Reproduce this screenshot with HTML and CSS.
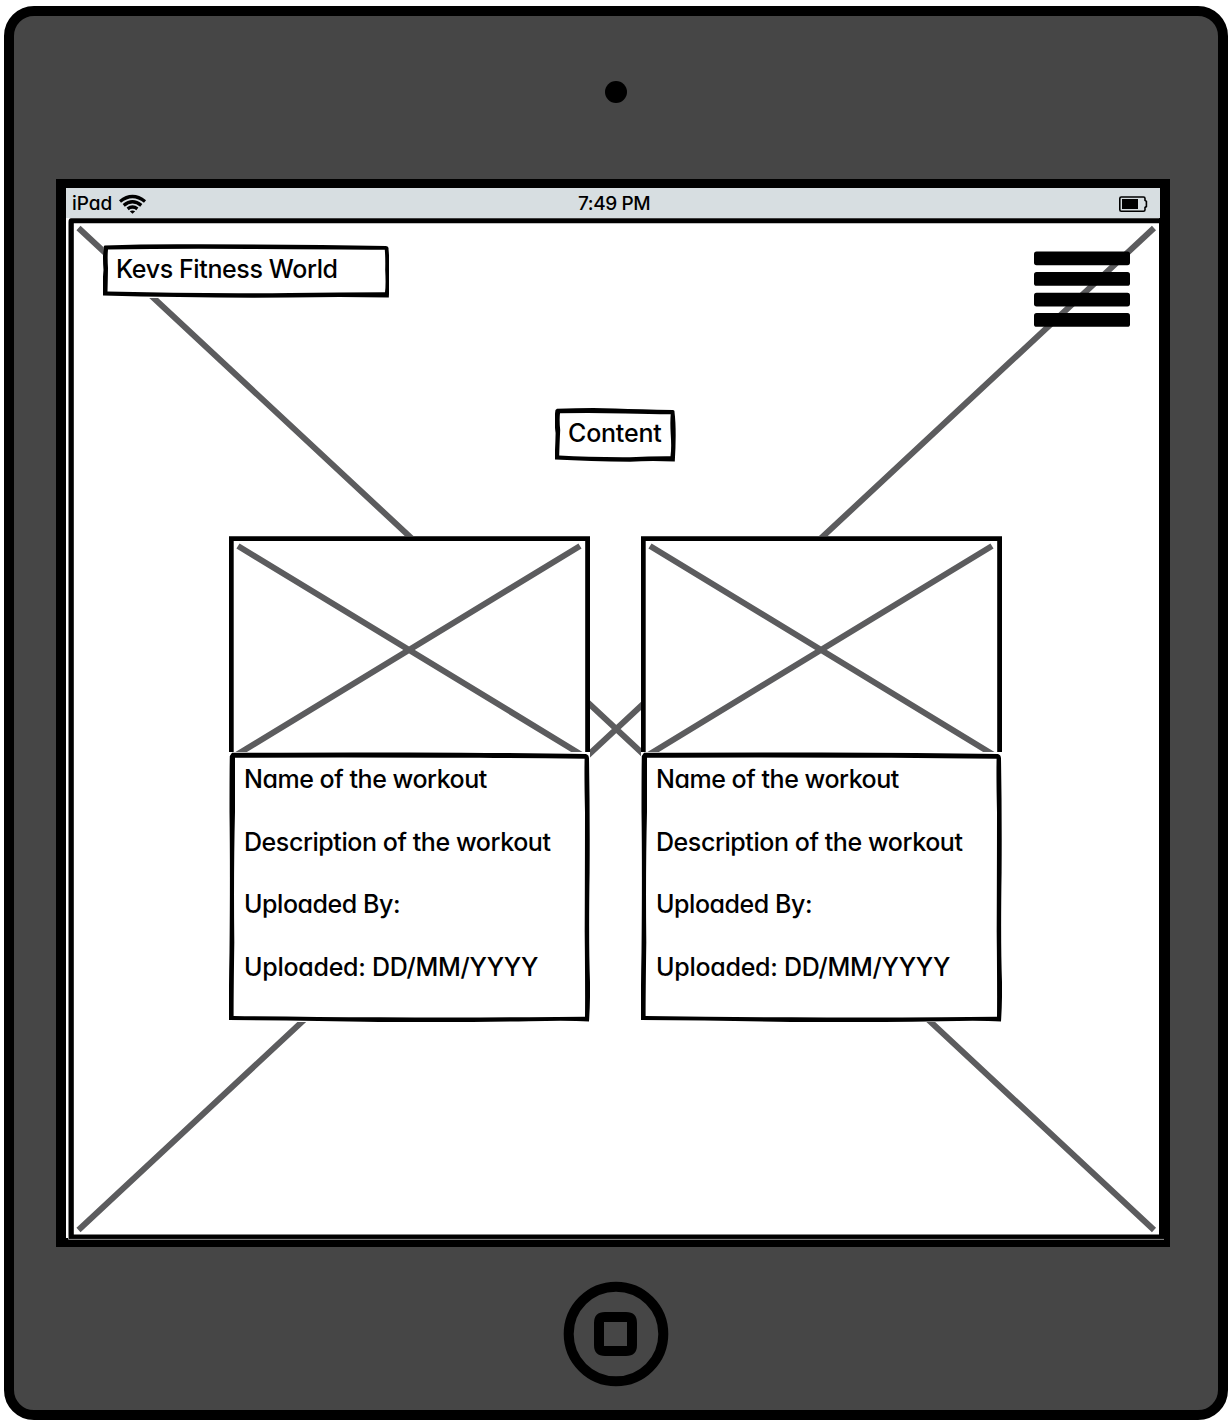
FILE: index.html
```html
<!DOCTYPE html>
<html lang="en">
<head>
<meta charset="utf-8">
<title>Kevs Fitness World</title>
<link rel="stylesheet" href="styles.css">
</head>
<body>
<div class="device">
  <div class="camera"></div>
  <div class="screen">
    <div class="status">
      <div class="carrier"><span class="carrier-name">iPad</span>
        <svg class="wifi" width="28" height="20" viewBox="119 193 28 20" fill="none" stroke="#000" stroke-width="3.3">
          <path d="M120 200.500Q132.500 190.500 145 200.500M123.700 204.400Q132.500 197.200 141.300 204.400M127.600 207.900Q132.500 204.200 137.400 207.900"/>
          <path d="M129.800 210.200Q132.500 208.600 135.200 210.200L132.500 212.800Z" fill="#000" stroke="none"/>
        </svg>
      </div>
      <span class="clock">7:49 PM</span>
      <svg class="battery" width="30" height="18" viewBox="1118 195 30 18">
        <path d="M1121.300 197H1143.500Q1145 197 1145 198.500V200.300L1146.400 201.300V206.500L1145 207.500V209.700Q1145 211.200 1143.500 211.200H1121.300Q1119.800 211.200 1119.800 209.700V198.500Q1119.800 197 1121.300 197Z" fill="none" stroke="#000" stroke-width="1.6"/>
        <path d="M1122 199H1138V209H1122Z"/>
      </svg>
    </div>
    <main class="canvas">
      <svg class="backdrop" width="1104" height="1029" viewBox="66 218 1104 1029">
        <path d="M78.500 228L1154 1230M1154 228L78.500 1230" stroke="#5c5c5e" stroke-width="6"/>
        <path d="M68.500 1238V222Q68.500 218.300 71 218.300H1160V223.200H73.800V1234.500H1162V1239H68.500Z" fill-rule="evenodd"/>
        <path d="M1159 218H1164V1239H1159Z"/>
        <path d="M68.500 1236V1239.400H1164" fill="none" stroke="#8b8b8b" stroke-width="1"/>
      </svg>
      <header class="topbar">
        <div class="box title">
          <svg class="outline" width="286" height="54" viewBox="103 244 286 54">
            <path fill-rule="evenodd" d="M104.500 245.500Q150 243.800 200 244.300Q300 244.600 386 246Q389 246.500 388.500 249Q390.500 270 388.800 297.500Q340 296.300 290 297.500Q200 298.200 103 295.500Q102.200 285 103.500 270Q102.500 258 103.500 247ZM108 249.500Q107.300 257 108 268Q107.800 280 107.500 291.500Q200 294 290 293Q340 292.200 385 292.200Q386 285 385.200 270Q385.500 258 384.800 249.800Q330 249.200 250 249Q170 248.500 108 249.500Z"/>
          </svg>
          <span class="title-text">Kevs Fitness World</span>
        </div>
        <svg class="menu" width="96" height="76" viewBox="0 0 96 76">
          <rect y=".4" width="96" height="13.800" rx="2.600"/>
          <rect y="21" width="96" height="13.800" rx="2.600"/>
          <rect y="41.800" width="96" height="13.600" rx="2.600"/>
          <rect y="62.100" width="96" height="13.700" rx="2.600"/>
        </svg>
      </header>
      <div class="box label">
        <svg class="outline" width="121" height="54" viewBox="555 408 121 54">
          <path fill-rule="evenodd" d="M557 408.700Q590 407.700 615 408.400Q640 409.300 673 410Q674.800 410.500 674.500 412Q676.700 430 674.800 461.500Q650 460.400 630 461.700Q590 461.400 554.500 459.500Q555.300 447 555.600 433Q553.800 420 555.500 410ZM560 413.300Q559.200 420 560.200 430Q559.500 445 559.200 455.500Q590 457.400 630 457.200Q650 456.200 670.500 456.300Q671.700 448 670.700 434Q670 422 670.700 414.300Q650 413.900 625 413.400Q590 412.900 560 413.300Z"/>
        </svg>
        <span class="label-text">Content</span>
      </div>
      <section class="cards">
        <article class="card">
          <svg class="thumb" width="361" height="216" viewBox="0 0 361 216">
            <path d="M0 0H361V216H0Z" fill="#fff"/>
            <path d="M9 10L352 218.500M351 10L8 218.500" stroke="#5c5c5e" stroke-width="6"/>
            <path d="M2.300 216V2.600H358.600V216" fill="none" stroke="#000" stroke-width="4.800"/>
          </svg>
          <div class="details">
            <svg class="outline" width="361" height="270" viewBox="0 0 361 270">
              <path fill-rule="evenodd" d="M3 .8Q100 .2 180 .5Q280 .8 357 2Q360.200 3 360 7Q361 60 360.600 120Q359.500 190 361 230Q361.300 250 360 269.500Q340 268 300 269.200Q220 270.700 150 270Q80 268.500 0 268Q-.3 240 .5 200Q1.300 120 .5 60Q.5 20 .8 4ZM6 5.800V60Q4.500 120 5.300 190Q4.600 240 4.600 264Q80 265 150 265.300Q230 265.800 300 265.200L356 264.800Q356.300 240 355.700 180Q356 90 356 60Q355.200 25 355.600 6.700Q300 6.200 250 5.800Q100 5.200 6 5.800Z"/>
            </svg>
            <p class="name">Name of the workout</p>
            <p class="description">Description of the workout</p>
            <p class="author">Uploaded By:</p>
            <p class="date">Uploaded: DD/MM/YYYY</p>
          </div>
        </article>
        <article class="card">
          <svg class="thumb" width="361" height="216" viewBox="0 0 361 216">
            <path d="M0 0H361V216H0Z" fill="#fff"/>
            <path d="M9 10L352 218.500M351 10L8 218.500" stroke="#5c5c5e" stroke-width="6"/>
            <path d="M2.300 216V2.600H358.600V216" fill="none" stroke="#000" stroke-width="4.800"/>
          </svg>
          <div class="details">
            <svg class="outline" width="361" height="270" viewBox="0 0 361 270">
              <path fill-rule="evenodd" d="M3 .8Q100 .2 180 .5Q280 .8 357 2Q360.200 3 360 7Q361 60 360.600 120Q359.500 190 361 230Q361.300 250 360 269.500Q340 268 300 269.200Q220 270.700 150 270Q80 268.500 0 268Q-.3 240 .5 200Q1.300 120 .5 60Q.5 20 .8 4ZM6 5.800V60Q4.500 120 5.300 190Q4.600 240 4.600 264Q80 265 150 265.300Q230 265.800 300 265.200L356 264.800Q356.300 240 355.700 180Q356 90 356 60Q355.200 25 355.600 6.700Q300 6.200 250 5.800Q100 5.200 6 5.800Z"/>
            </svg>
            <p class="name">Name of the workout</p>
            <p class="description">Description of the workout</p>
            <p class="author">Uploaded By:</p>
            <p class="date">Uploaded: DD/MM/YYYY</p>
          </div>
        </article>
      </section>
    </main>
  </div>
  <svg class="home" width="106" height="106" viewBox="0 0 106 106">
    <circle cx="53" cy="53" r="47.300" fill="none" stroke="#000" stroke-width="10"/>
    <path fill-rule="evenodd" d="M42 31H63Q74 31 74 42V64Q74 75 63 75H42Q31 75 31 64V42Q31 31 42 31ZM41 41V65H64V41Z"/>
  </svg>
</div>
</body>
</html>
```
FILE: styles.css
```css
* {
  box-sizing: border-box;
}

body {
  margin: 0;
  padding: 6px 4px 4px;
  background: #fff;
  color: #000;
  font-family: Inter, "Open Sans", sans-serif;
  font-feature-settings: "cv11";
  font-size: 25px;
  font-weight: 500;
  line-height: 31.3px;
  white-space: nowrap;
}

svg {
  display: block;
  flex: none;
}

.device {
  display: flex;
  flex-direction: column;
  align-items: center;
  width: 1224px;
  height: 1414px;
  padding-top: 65px;
  border: 10px solid #000;
  border-radius: 30px;
  background: #464646;
}

.camera {
  width: 22px;
  height: 22px;
  border-radius: 50%;
  background: #000;
}

.screen {
  align-self: flex-start;
  width: 1114px;
  height: 1068px;
  margin: 76px 0 34px 42px;
  border: solid #000;
  border-width: 9px 10px;
  background: #fff;
}

.status {
  display: grid;
  grid-template-columns: 549px 1fr auto;
  align-items: center;
  height: 30px;
  padding: 2px 12px 0 6px;
  background: #d7dee1;
  font-size: 19px;
  line-height: 28px;
}

.status .clock {
  justify-self: start;
  margin-left: -43px;
  letter-spacing: -0.4px;
}

.carrier {
  display: flex;
  align-items: center;
  gap: 7px;
}

.wifi {
  margin-top: -1px;
}

.canvas {
  position: relative;
  height: 1020px;
  padding-top: 26px;
}

.backdrop {
  position: absolute;
  top: 0;
  left: 0;
}

.topbar {
  display: flex;
  justify-content: space-between;
  height: 83px;
  padding: 0 30px 0 37px;
}

.box {
  position: relative;
  height: 54px;
  background: #fff;
  line-height: 50px;
}

.outline {
  position: absolute;
  top: 0;
  left: 0;
}

.title {
  width: 286px;
  padding-left: 13px;
  letter-spacing: -0.38px;
}

.menu {
  position: relative;
  margin-top: 7px;
}

.label {
  width: 121px;
  margin: 81px 0 0 489px;
  padding-left: 13px;
  letter-spacing: -0.2px;
}

.cards {
  position: relative;
  display: flex;
  gap: 51px;
  margin: 74px 0 0 163px;
}

.card {
  width: 361px;
}

.details {
  position: relative;
  display: flex;
  flex-direction: column;
  gap: 31.3px;
  height: 270px;
  padding: 12px 0 0 15px;
  background: #fff;
}

.details p {
  margin: 0;
}

.name {
  letter-spacing: -0.46px;
}

.description {
  letter-spacing: -0.43px;
}

.author {
  letter-spacing: -0.45px;
}

.date {
  letter-spacing: -0.27px;
}
```
